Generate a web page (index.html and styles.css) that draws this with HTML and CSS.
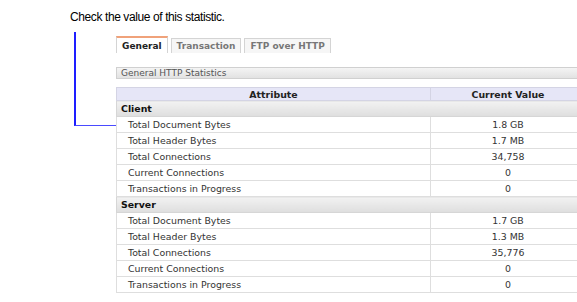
FILE: index.html
```html
<!DOCTYPE html>
<html lang="en">
<head>
    <meta charset="UTF-8">
    <title>General HTTP Statistics</title>
    <link rel="stylesheet" href="styles.css">
</head>
<body>
    <p class="caption">Check the value of this statistic.</p>

    <div class="figure">
        <div class="callout"></div>

        <div class="panel">
            <div class="tabs">
                <span class="tab active">General</span>
                <span class="tab">Transaction</span>
                <span class="tab">FTP over HTTP</span>
            </div>

            <div class="section-bar">General HTTP Statistics</div>

            <table class="stats">
                <thead>
                    <tr>
                        <th class="col-attr">Attribute</th>
                        <th class="col-value">Current Value</th>
                    </tr>
                </thead>
                <tbody>
                    <tr class="group"><td colspan="2">Client</td></tr>
                    <tr><td>Total Document Bytes</td><td class="num">1.8 GB</td></tr>
                    <tr><td>Total Header Bytes</td><td class="num">1.7 MB</td></tr>
                    <tr><td>Total Connections</td><td class="num">34,758</td></tr>
                    <tr><td>Current Connections</td><td class="num">0</td></tr>
                    <tr><td>Transactions in Progress</td><td class="num">0</td></tr>
                    <tr class="group"><td colspan="2">Server</td></tr>
                    <tr><td>Total Document Bytes</td><td class="num">1.7 GB</td></tr>
                    <tr><td>Total Header Bytes</td><td class="num">1.3 MB</td></tr>
                    <tr><td>Total Connections</td><td class="num">35,776</td></tr>
                    <tr><td>Current Connections</td><td class="num">0</td></tr>
                    <tr><td>Transactions in Progress</td><td class="num">0</td></tr>
                </tbody>
            </table>
        </div>
    </div>
</body>
</html>
```

FILE: styles.css
```css
body {
    margin: 0;
    background: white;
    overflow: hidden;
    font-family: "DejaVu Sans", Verdana, sans-serif;
}
.caption {
    margin: 0;
    padding: 10px 0 0 70px;
    font-family: "Liberation Sans", Arial, sans-serif;
    font-size: 12px;
    letter-spacing: -0.4px;
    color: #000;
    line-height: 15px;
}
.figure {
    display: flex;
    align-items: flex-start;
    margin-top: 7px;
    width: 620px;
}
.callout {
    flex: none;
    width: 40px;
    height: 93px;
    margin-left: 74px;
    border-left: 2px solid #1e1eff;
    border-bottom: 1px solid #4a4aff;
}
.panel {
    flex: none;
    width: 470px;
    margin-top: 4px;
}
.tabs {
    display: flex;
    gap: 3px;
    height: 17px;
}
.tab {
    padding: 0 5px;
    font-size: 9px;
    font-weight: bold;
    line-height: 15px;
    color: #777;
    background: #f6f6f6;
    border: 1px solid #d4d4d4;
    border-bottom: none;
    margin-top: 2px;
}
.tab.active {
    color: #222;
    background: #fff;
    border-top: 2px solid #f0a27a;
    margin-top: 0;
    line-height: 16px;
}
.section-bar {
    margin-top: 14px;
    height: 10px;
    padding-left: 4px;
    font-size: 9px;
    line-height: 10px;
    color: #555;
    border: 1px solid #d0d0d0;
    background: linear-gradient(#f4f4f4, #e2e2e2);
}
.stats {
    margin-top: 8px;
    width: 100%;
    border-collapse: collapse;
    font-size: 9.4px;
    color: #333;
}
.stats th {
    height: 12px;
    padding: 0;
    font-weight: bold;
    color: #222;
    background: #e6e6f7;
    border: 1px solid #d4d4e4;
    text-align: center;
}
.col-attr {
    width: 313px;
}
.stats td {
    height: 15px;
    padding: 0 0 0 11px;
    border: 1px solid #dedede;
    border-top: none;
    line-height: 15px;
}
.stats td.num {
    padding: 0;
    text-align: center;
}
.stats tr.group td {
    padding-left: 4px;
    font-weight: bold;
    color: #111;
    background: linear-gradient(#f2f2f2, #dedede);
    border-color: #d6d6d6;
}
```
